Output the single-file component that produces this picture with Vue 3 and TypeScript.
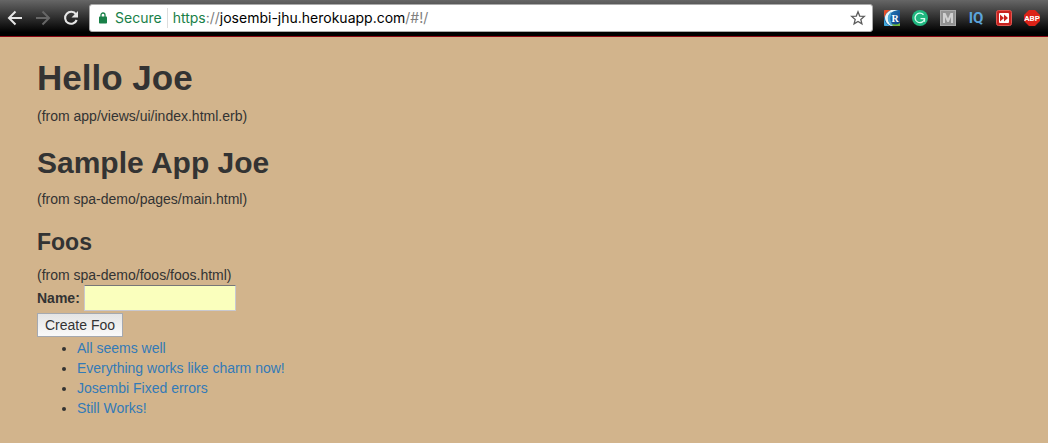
<script setup lang="ts">
import { ref } from 'vue'

const name = ref('')
const foos = ref<string[]>([
  'All seems well',
  'Everything works like charm now!',
  'Josembi Fixed errors',
  'Still Works!',
])

function createFoo(): void {
  if (!name.value) return
  foos.value.push(name.value)
  name.value = ''
}
</script>

<template>
  <div class="window">
    <header class="toolbar">
      <nav class="nav">
        <button type="button" aria-label="Back">
          <svg width="16" height="16" viewBox="0 0 16 16" fill="none" stroke="#e6e6e6" stroke-width="2">
            <path d="M15 8H2.5M8.5 1.5L2 8l6.500 6.500" />
          </svg>
        </button>
        <button type="button" aria-label="Forward" disabled>
          <svg width="16" height="16" viewBox="0 0 16 16" fill="none" stroke="#666" stroke-width="2">
            <path d="M1 8h12.500M7.500 1.500L14 8l-6.500 6.500" />
          </svg>
        </button>
        <button type="button" aria-label="Reload">
          <svg width="16" height="16" viewBox="0 0 16 16">
            <path d="M13 4.300A6 6 0 1 0 13.700 10" fill="none" stroke="#e6e6e6" stroke-width="2.100" />
            <path d="M15 1v6.500H8.500z" fill="#e6e6e6" />
          </svg>
        </button>
      </nav>

      <div class="address">
        <svg class="lock" width="8" height="12" viewBox="0 0 8 12">
          <path d="M2 5V3a2 2 0 0 1 4 0v2" fill="none" stroke="#188048" stroke-width="1.300" />
          <rect x="0" y="4.500" width="8" height="7" rx="0.800" fill="#188048" />
        </svg>
        <span class="secure">Secure</span>
        <span class="url"><span class="scheme">https</span><span class="dim">://</span>josembi-jhu.herokuapp.com<span class="dim">/#!/</span></span>
        <button type="button" class="star" aria-label="Bookmark this page">
          <svg width="16" height="16" viewBox="0 0 16 16">
            <path d="M8 1.800l1.700 4.300 4.600.3-3.500 3 1.100 4.500L8 11.400l-3.900 2.500 1.100-4.500-3.500-3 4.600-.3z" fill="none" stroke="#5c5c5c" stroke-width="1.300" />
          </svg>
        </button>
      </div>

      <div class="extensions">
        <button type="button" aria-label="R extension">
          <svg width="16" height="16" viewBox="0 0 16 16">
            <defs>
              <linearGradient id="swirl" x1="0" y1="0" x2="1" y2="1">
                <stop offset="0" stop-color="#2786c4" />
                <stop offset="1" stop-color="#0b397e" />
              </linearGradient>
            </defs>
            <rect width="16" height="16" rx="1" fill="url(#swirl)" />
            <path d="M0 1a1 1 0 0 1 1-1h6Q2 2 0 8z" fill="#e34e28" />
            <path d="M7 0h7Q4 2 4 8t6 8H7Q1 13 1 8t6-8z" fill="#eaf6f8" />
            <path d="M0 9q1 5 6 7H1a1 1 0 0 1-1-1z" fill="#42aadc" />
            <path d="M7 13q4 3 9 0v3H9z" fill="#70b83c" />
            <path d="M7 2Q3 5 4 10t5 6Q5 10 7 5z" fill="#4ca9d8" />
            <text x="11" y="12" text-anchor="middle" font-family="Liberation Serif, serif" font-size="10" font-weight="700" fill="#fff">R</text>
          </svg>
        </button>
        <button type="button" aria-label="Writing assistant">
          <svg width="16" height="16" viewBox="0 0 16 16">
            <circle cx="8" cy="8" r="8" fill="#20b880" />
            <path d="M11.500 4.700A4.800 4.800 0 1 0 12.600 8.800" fill="none" stroke="#d8fff0" stroke-width="1.300" />
            <path d="M8.500 8.700h4v3" fill="none" stroke="#d8fff0" stroke-width="1.300" />
          </svg>
        </button>
        <button type="button" aria-label="M extension">
          <svg width="16" height="16" viewBox="0 0 16 16">
            <rect x="0.500" y="0.500" width="15" height="15" fill="#929292" stroke="#aaa" />
            <path d="M3 13V3h2.500L8 8.500 10.500 3H13v10h-2V7l-2.300 5H7.300L5 7v6z" fill="#d0d0d0" />
          </svg>
        </button>
        <button type="button" class="iq" aria-label="IQ extension">IQ</button>
        <button type="button" aria-label="Fast forward">
          <svg width="16" height="16" viewBox="0 0 16 16">
            <rect x="0.500" y="0.500" width="15" height="15" rx="2" fill="#c9231f" stroke="#df5650" />
            <rect x="3" y="3" width="10" height="10" rx="1" fill="#fff" />
            <path d="M4 4.500L8 8l-4 3.500zM8 4.500L12 8l-4 3.500z" fill="#c9231f" />
          </svg>
        </button>
        <button type="button" aria-label="Ad blocker">
          <svg width="16" height="16" viewBox="0 0 16 16">
            <path d="M5 0h6l5 5v6l-5 5H5l-5-5V5z" fill="#dc2318" />
            <text x="8" y="11" text-anchor="middle" font-family="Roboto, sans-serif" font-size="8" font-weight="700" fill="#fff">ABP</text>
          </svg>
        </button>
      </div>
    </header>

    <main class="page">
      <h1>Hello Joe</h1>
      <p>(from app/views/ui/index.html.erb)</p>
      <h2>Sample App Joe</h2>
      <p>(from spa-demo/pages/main.html)</p>
      <h3>Foos</h3>
      <p>(from spa-demo/foos/foos.html)</p>
      <form @submit.prevent="createFoo">
        <div class="field">
          <label for="foo-name">Name:</label>
          <input id="foo-name" v-model="name" type="text" />
        </div>
        <button type="submit" class="create">Create Foo</button>
      </form>
      <ul>
        <li v-for="foo in foos" :key="foo"><a href="#">{{ foo }}</a></li>
      </ul>
    </main>
  </div>
</template>

<style>
body {
  margin: 0;
  background: #d2b48c;
}
</style>

<style scoped>
.window {
  min-height: 100vh;
  background: #d2b48c;
  color: #333;
  font: 14px/20px "Liberation Sans", Arial, sans-serif;
}
.window * {
  box-sizing: border-box;
}
.toolbar {
  display: flex;
  align-items: center;
  height: 37px;
  padding: 0 8px 1px 7px;
  border-bottom: 1px solid #8c0815;
  background: linear-gradient(#666, #000 90%);
}
.toolbar button {
  display: block;
  padding: 0;
  border: 0;
  background: none;
}
.toolbar svg {
  display: block;
}
.nav {
  display: flex;
  gap: 12px;
  width: 82px;
}
.address {
  display: flex;
  flex: 1;
  align-items: center;
  height: 28px;
  padding: 0 6px 0 9px;
  border: 1px solid #aaa;
  border-radius: 3px;
  background: #fff;
  color: #000;
  font: 14px/20px Inter, Roboto, sans-serif;
}
.lock {
  margin-right: 8px;
}
.secure {
  padding-right: 5px;
  border-right: 1px solid #ddd;
  color: #188048;
}
.url {
  flex: 1;
  padding-left: 5px;
}
.scheme {
  color: #188048;
}
.dim {
  color: #808080;
}
.extensions {
  display: flex;
  align-items: center;
  gap: 12px;
  padding-left: 11px;
}
.toolbar .iq {
  width: 16px;
  color: #5ba4da;
  font: 700 15px/16px Roboto, sans-serif;
}
.page {
  padding: 20px 37px;
}
h1,
h2,
h3 {
  margin: 20px 0 10px;
  font-weight: 700;
}
h1 {
  margin: 0 0 8px;
  font-size: 35px;
  line-height: 41px;
}
h2 {
  font-size: 30px;
  line-height: 33px;
}
h3 {
  font-size: 23px;
  line-height: 26px;
}
p {
  margin: 0;
}
.field {
  display: flex;
  align-items: center;
  gap: 4px;
}
label {
  font-weight: 700;
}
input {
  width: 152px;
  height: 26px;
  padding: 2px;
  border: 1px solid #c8c8d0;
  border-top-color: #777;
  background: #faffbd;
  color: #333;
  font: inherit;
}
.create {
  display: block;
  height: 24px;
  margin: 2px 0 1px;
  padding: 0 7px;
  border: 1px solid #a5a9b0;
  background: linear-gradient(#e4e4e4, #fafafa);
  color: #333;
  font: inherit;
}
ul {
  margin: 0;
  padding-left: 40px;
}
a {
  color: #337ab7;
  text-decoration: none;
}
</style>
